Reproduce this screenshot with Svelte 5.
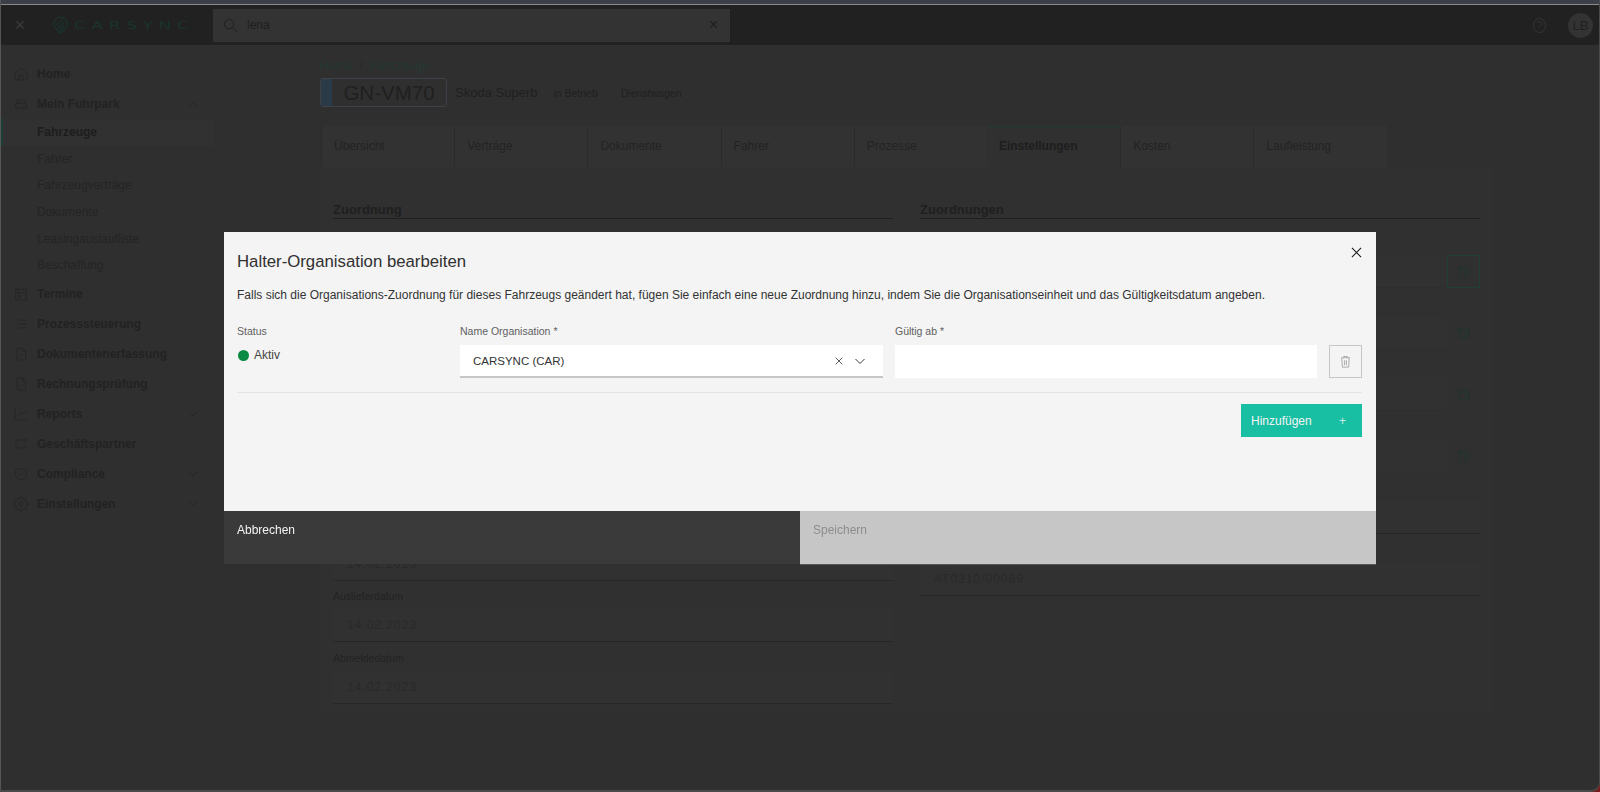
<script>
  const icons = {
    home: 'M3 10.5 12 3l9 7.5V21H3Z M9 21v-7h6v7',
    car: 'M5 11l1.5-5h11L19 11 M4 11h16v7H4Z M6 18v2 M18 18v2 M7.5 14.5h1 M15.5 14.5h1',
    calendar: 'M4 5h16v16H4Z M4 10h16 M8 3v4 M16 3v4 M8 14h3v3H8Z',
    list: 'M9 6h12 M9 12h12 M9 18h12 M4 6h1 M4 12h1 M4 18h1',
    docEdit: 'M6 3h8l5 5v13H6Z M14 3v5h5 M9 17l6-6',
    docCheck: 'M6 3h8l5 5v13H6Z M14 3v5h5 M9 15l2 2 4-4',
    chart: 'M3 3v18h18 M7 15l4-5 3 3 6-7',
    swap: 'M4 11V8a2 2 0 0 1 2-2h14 M17 3l3 3-3 3 M20 13v3a2 2 0 0 1-2 2H4 M7 21l-3-3 3-3',
    shield: 'M12 3l8 3v6c0 5-3.5 8-8 9-4.5-1-8-4-8-9V6Z M9 12l2 2 4-4',
    gear: 'M12 15a3 3 0 1 0 0-6 3 3 0 0 0 0 6Z M19.4 15a1.65 1.65 0 0 0 .33 1.82l.06.06a2 2 0 1 1-2.83 2.83l-.06-.06a1.65 1.65 0 0 0-2.82 1.17V21a2 2 0 1 1-4 0v-.09a1.65 1.65 0 0 0-2.82-1.16l-.06.06a2 2 0 1 1-2.83-2.83l.06-.06A1.65 1.65 0 0 0 3.09 14H3a2 2 0 1 1 0-4h.09a1.65 1.65 0 0 0 1.16-2.82l-.06-.06a2 2 0 1 1 2.83-2.83l.06.06A1.65 1.65 0 0 0 10 3.09V3a2 2 0 1 1 4 0v.09a1.65 1.65 0 0 0 2.82 1.16l.06-.06a2 2 0 1 1 2.83 2.83l-.06.06A1.65 1.65 0 0 0 20.91 10H21a2 2 0 1 1 0 4h-.09a1.65 1.65 0 0 0-1.51 1Z',
    history: 'M3 12a9 9 0 1 0 3-6.7L3 8 M3 3v5h5 M12 7v5l3 2',
    trash: 'M5 6h14 M9 6V4h6v2 M6 6l1 15h10l1-15 M10.5 10v8 M13.5 10v8'
  };

  const nav = [
    { label: 'Home', icon: 'home' },
    { label: 'Mein Fuhrpark', icon: 'car', open: true, chevron: true },
    { label: 'Fahrzeuge', sub: true, active: true },
    { label: 'Fahrer', sub: true },
    { label: 'Fahrzeugverträge', sub: true },
    { label: 'Dokumente', sub: true },
    { label: 'Leasingauslaufliste', sub: true },
    { label: 'Beschaffung', sub: true },
    { label: 'Termine', icon: 'calendar' },
    { label: 'Prozesssteuerung', icon: 'list' },
    { label: 'Dokumentenerfassung', icon: 'docEdit' },
    { label: 'Rechnungsprüfung', icon: 'docCheck' },
    { label: 'Reports', icon: 'chart', chevron: true },
    { label: 'Geschäftspartner', icon: 'swap' },
    { label: 'Compliance', icon: 'shield', chevron: true },
    { label: 'Einstellungen', icon: 'gear', chevron: true }
  ];

  const tabs = ['Übersicht', 'Verträge', 'Dokumente', 'Fahrer', 'Prozesse', 'Einstellungen', 'Kosten', 'Laufleistung'];

  // the upper fields sit behind the dialog, only the last ones show
  const leftFields = [
    {}, {}, {}, {}, {},
    { value: '14.02.2023' },
    { label: 'Auslieferdatum', value: '14.02.2023' },
    { label: 'Abmeldedatum', value: '14.02.2023' }
  ];

  const rightRows = [
    { history: true, first: true },
    { history: true },
    { history: true },
    { history: true },
    {},
    { value: 'AT0310/00089' }
  ];
</script>

{#snippet icon(name, cls)}
  <svg class={cls} viewBox="0 0 24 24" fill="none" stroke="currentColor" stroke-width="1.5">
    <path d={icons[name]} />
  </svg>
{/snippet}

<div class="frame">
  <div class="topstrip"></div>
  <header>
    <span class="menu-x">×</span>
    <div class="logo">
      <svg viewBox="0 0 20 24" width="15" height="19" fill="none" stroke="currentColor" stroke-width="1.6">
        <path d="M10 23 3 15.5A9 9 0 1 1 17 15.5Z" />
        <path d="M5 12 13 4 M6 17 15 8 M9 20 15 13" />
      </svg>
      <span>CARSYNC</span>
    </div>
    <div class="search">
      <svg viewBox="0 0 16 16" width="15" height="15" fill="none" stroke="currentColor" stroke-width="1">
        <circle cx="6.5" cy="6.5" r="5" /><path d="M10 10l5 5" />
      </svg>
      <span class="query">lena</span>
      <span class="clear">×</span>
    </div>
    <div class="user">
      <span class="help">?</span>
      <span class="avatar">LB</span>
    </div>
  </header>

  <div class="body">
    <aside>
      {#each nav as item}
        <div class="nav-item" class:sub={item.sub} class:active={item.active} class:strong={!item.sub}>
          {#if item.icon}{@render icon(item.icon, 'nav-icon')}{/if}
          <span>{item.label}</span>
          {#if item.chevron}
            <svg class="chev" class:up={item.open} viewBox="0 0 16 16" fill="none" stroke="currentColor" stroke-width="1">
              <path d="M3 5.5l5 5 5-5" />
            </svg>
          {/if}
        </div>
      {/each}
    </aside>

    <main>
      <div class="crumbs"><span>Home</span><i>/</i><span>Fahrzeuge</span></div>
      <div class="vehicle">
        <div class="plate"><b></b><span>GN-VM70</span></div>
        <span class="model">Skoda Superb</span>
        <span class="tag">in Betrieb</span>
        <span class="tag">Dienstwagen</span>
      </div>
      <div class="tabs">
        {#each tabs as tab}
          <div class="tab" class:current={tab === 'Einstellungen'}>{tab}</div>
        {/each}
      </div>
      <div class="panel">
        <section>
          <h3>Zuordnung</h3>
          {#each leftFields as field}
            <div class="field">
              <div class="flabel">{field.label ?? ''}</div>
              <div class="input">{field.value ?? ''}</div>
            </div>
          {/each}
        </section>
        <section class="right">
          <h3>Zuordnungen</h3>
          {#each rightRows as row}
            <div class="field">
              <div class="flabel"></div>
              <div class="row">
                <div class="input" class:quiet={row.history}>{row.value ?? ''}</div>
                {#if row.history}
                  <div class="hist" class:first={row.first}>{@render icon('history', 'hist-icon')}</div>
                {/if}
              </div>
            </div>
          {/each}
        </section>
      </div>
    </main>
  </div>
</div>

<div class="overlay">
  <div class="modal">
    <div class="modal-body">
      <button class="close" aria-label="Schließen">
        <svg viewBox="0 0 12 12" width="11" height="11" stroke="#161616" stroke-width="1.1"><path d="M1 1l10 10M11 1 1 11" /></svg>
      </button>
      <h2>Halter-Organisation bearbeiten</h2>
      <p>Falls sich die Organisations-Zuordnung für dieses Fahrzeugs geändert hat, fügen Sie einfach eine neue Zuordnung hinzu, indem Sie die Organisationseinheit und das Gültigkeitsdatum angeben.</p>
      <div class="form-row">
        <div class="col-status">
          <span class="lbl">Status</span>
          <div class="status"><i></i>Aktiv</div>
        </div>
        <div class="col-org">
          <span class="lbl">Name Organisation *</span>
          <div class="select">
            <span>CARSYNC (CAR)</span>
            <svg viewBox="0 0 12 12" width="10" height="10" stroke="#393939" stroke-width="1"><path d="M2 2l8 8M10 2l-8 8" /></svg>
            <svg viewBox="0 0 12 12" width="12" height="12" fill="none" stroke="#393939" stroke-width="1"><path d="M1.5 4l4.5 4.5L10.5 4" /></svg>
          </div>
        </div>
        <div class="col-date">
          <span class="lbl">Gültig ab *</span>
          <div class="date"></div>
        </div>
        <button class="trash" aria-label="Löschen">{@render icon('trash', 'trash-icon')}</button>
      </div>
      <div class="actions">
        <button class="add"><span>Hinzufügen</span><span class="plus">+</span></button>
      </div>
    </div>
    <div class="modal-footer">
      <button class="cancel">Abbrechen</button>
      <button class="save">Speichern</button>
    </div>
  </div>
</div>

<style>
  :global(body) {
    background: #7a1a1a;
    font-family: 'Liberation Sans', Arial, sans-serif;
  }
  .frame {
    height: 792px;
    background: #2f2f2f;
    border-left: 1px solid #555;
    border-right: 1px solid #4a4a4a;
    border-bottom: 2px solid #4a4a4a;
    border-bottom-right-radius: 9px;
    overflow: hidden;
    box-sizing: border-box;
  }
  .topstrip {
    height: 4px;
    background: #3c3f48;
    border-bottom: 1px solid #8a8a8a;
  }
  header {
    height: 40px;
    background: #212121;
    display: flex;
    align-items: center;
  }
  .menu-x {
    width: 38px;
    text-align: center;
    color: #3a3a3a;
    font-size: 18px;
  }
  .logo {
    width: 174px;
    display: flex;
    align-items: center;
    gap: 6px;
    padding-left: 14px;
    box-sizing: border-box;
    color: #1a332d;
  }
  .logo span {
    font-family: 'DejaVu Sans', sans-serif;
    font-size: 11px;
    letter-spacing: 3.6px;
    transform: scaleX(1.55);
    transform-origin: left;
  }
  .search {
    width: 517px;
    height: 33px;
    background: #333;
    display: flex;
    align-items: center;
    padding: 0 10px;
    box-sizing: border-box;
    color: #1e1e1e;
    font-size: 12px;
  }
  .query {
    margin-left: 9px;
    flex: 1;
  }
  .clear {
    font-size: 16px;
    margin-right: 2px;
  }
  .user {
    margin-left: auto;
    display: flex;
    align-items: center;
    gap: 22px;
    padding-right: 6px;
  }
  .help {
    width: 11px;
    height: 13px;
    border: 1px solid #333;
    border-radius: 50%;
    color: #333;
    font-size: 10px;
    line-height: 13px;
    text-align: center;
  }
  .avatar {
    width: 25px;
    height: 25px;
    border-radius: 50%;
    background: #333;
    color: #202020;
    font-size: 13px;
    line-height: 25px;
    text-align: center;
  }
  .body {
    display: flex;
  }
  aside {
    width: 212px;
    padding-top: 14px;
    flex-shrink: 0;
  }
  .nav-item {
    height: 30px;
    display: flex;
    align-items: center;
    padding-left: 36px;
    position: relative;
    color: #222;
    font-size: 12px;
  }
  .nav-item.strong {
    font-weight: 700;
  }
  .nav-item.sub {
    height: 26.6px;
    color: #242424;
  }
  .nav-item.active {
    color: #1d1d1d;
    font-weight: 700;
    background: #313131;
    border-left: 2px solid #1d3f37;
    padding-left: 34px;
  }
  .nav-icon {
    position: absolute;
    left: 12px;
    top: 7px;
    width: 16px;
    height: 16px;
    color: #262626;
  }
  .chev {
    position: absolute;
    right: 14px;
    top: 9px;
    width: 12px;
    height: 12px;
    color: #222;
  }
  .chev.up {
    transform: rotate(180deg);
  }
  main {
    flex: 1;
    padding: 14px 0 0 107px;
  }
  .crumbs {
    height: 14px;
    display: flex;
    gap: 7px;
    font-size: 12px;
    line-height: 14px;
    letter-spacing: 0.16px;
    color: #243833;
  }
  .crumbs i {
    font-style: normal;
    color: #282828;
  }
  .vehicle {
    margin-top: 5px;
    display: flex;
    align-items: center;
    height: 29px;
    color: #202020;
  }
  .plate {
    width: 127px;
    height: 29px;
    box-sizing: border-box;
    border: 1px solid #3c4247;
    border-radius: 3px;
    display: flex;
    overflow: hidden;
  }
  .plate b {
    width: 11px;
    background: #2b3a47;
  }
  .plate span {
    flex: 1;
    text-align: center;
    font-size: 20.5px;
    line-height: 27px;
  }
  .model {
    margin-left: 8px;
    font-size: 13px;
  }
  .tag {
    margin-left: 16px;
    font-size: 10.5px;
  }
  .tag:last-child {
    margin-left: 23px;
  }
  .tabs {
    margin-top: 19px;
    margin-left: 1px;
    display: flex;
  }
  .tab {
    width: 133.2px;
    height: 41px;
    box-sizing: border-box;
    background: #323232;
    border-left: 1px solid #2b2b2b;
    padding-left: 12px;
    line-height: 41px;
    font-size: 12px;
    color: #232323;
  }
  .tab.current {
    background: #303030;
    border-top: 1px solid #1f3a33;
    border-left: 0;
    line-height: 39px;
    font-weight: 700;
    color: #1e1e1e;
  }
  .panel {
    width: 1173px;
    background: #303030;
    padding: 35px 13px 0;
    box-sizing: border-box;
    display: flex;
    gap: 27px;
  }
  section {
    flex: 1;
  }
  h3 {
    margin: 0 0 1px;
    padding-bottom: 1px;
    height: 15px;
    border-bottom: 1px solid #1f1f1f;
    font-size: 13px;
    line-height: 15px;
    color: #1f1f1f;
  }
  .right h3 {
    margin-bottom: 16px;
  }
  .field {
    height: 61.5px;
  }
  .flabel {
    height: 20px;
    font-size: 10.5px;
    line-height: 14px;
    color: #232323;
  }
  .input {
    height: 32px;
    background: #313131;
    border-bottom: 1px solid #272727;
    padding-left: 14px;
    font-size: 12px;
    line-height: 32px;
    letter-spacing: 1px;
    color: #292929;
    flex: 1;
  }
  .input.quiet {
    border-bottom-color: #2e2e2e;
  }
  .row {
    display: flex;
  }
  .hist {
    width: 33px;
    height: 33px;
    display: flex;
    align-items: center;
    justify-content: center;
    box-sizing: border-box;
    color: #1f3430;
  }
  .hist.first {
    border: 1px solid #1f3f37;
  }
  .hist-icon {
    width: 14px;
    height: 14px;
    stroke-width: 2;
  }
  .overlay {
    position: fixed;
    inset: 0;
    display: flex;
    justify-content: center;
    padding-top: 232px;
  }
  .modal {
    width: 1152px;
    height: 332px;
    display: flex;
    flex-direction: column;
    color: #303030;
  }
  .modal-body {
    flex: 1;
    background: #f4f4f4;
    padding: 0 14px 0 13px;
    position: relative;
  }
  .close {
    position: absolute;
    top: 15px;
    right: 14px;
    padding: 0;
    border: 0;
    background: none;
    display: flex;
  }
  h2 {
    margin: 19px 0 0;
    font-size: 16.75px;
    font-weight: 400;
    line-height: 21px;
  }
  p {
    margin: 15px 0 0;
    font-size: 12px;
    line-height: 16px;
    color: #333;
  }
  .form-row {
    margin-top: 21px;
    display: flex;
    align-items: flex-start;
    padding-bottom: 14px;
    border-bottom: 1px solid #e4e4e4;
  }
  .lbl {
    display: block;
    height: 21px;
    font-size: 10.5px;
    line-height: 14px;
    color: #5f5f5f;
  }
  .col-status {
    width: 223px;
  }
  .status {
    display: flex;
    align-items: center;
    margin-top: 3px;
    font-size: 12px;
    color: #444;
  }
  .status i {
    width: 11px;
    height: 11px;
    margin: 0 5px 0 1px;
    border-radius: 50%;
    background: #0a8a43;
  }
  .col-org {
    width: 423px;
    margin-right: 12px;
  }
  .select {
    height: 33px;
    box-sizing: border-box;
    background: #fff;
    border-bottom: 2px solid #c6c6c6;
    display: flex;
    align-items: center;
    gap: 10px;
    padding: 0 17px 0 13px;
    font-size: 11.5px;
    color: #333;
  }
  .select span {
    flex: 1;
  }
  .col-date {
    width: 422px;
    margin-right: 12px;
  }
  .date {
    height: 33px;
    background: #fff;
  }
  .trash {
    width: 33px;
    height: 33px;
    margin-top: 21px;
    padding: 0;
    box-sizing: border-box;
    border: 1px solid #c6c6c6;
    background: none;
    color: #a8a8a8;
    display: flex;
    align-items: center;
    justify-content: center;
  }
  .trash-icon {
    width: 15px;
    height: 15px;
  }
  .actions {
    margin-top: 11px;
    display: flex;
    justify-content: flex-end;
  }
  .add {
    width: 121px;
    height: 33px;
    border: 0;
    padding: 0 16px 0 10px;
    background: #18bfa3;
    color: #f4f4f4;
    font-family: inherit;
    font-size: 12px;
    display: flex;
    align-items: center;
    justify-content: space-between;
  }
  .plus {
    font-size: 12px;
    margin-top: 1px;
    opacity: 0.8;
  }
  .modal-footer {
    height: 53px;
    display: flex;
  }
  .modal-footer button {
    flex: 1;
    border: 0;
    padding: 12px 13px 0;
    display: flex;
    align-items: flex-start;
    font-family: inherit;
    font-size: 12px;
    line-height: 15px;
  }
  .cancel {
    background: #3a3a3a;
    color: #f4f4f4;
  }
  .save {
    background: #c6c6c6;
    color: #8d8d8d;
    box-shadow: 0 1px 0 #555;
  }
</style>
